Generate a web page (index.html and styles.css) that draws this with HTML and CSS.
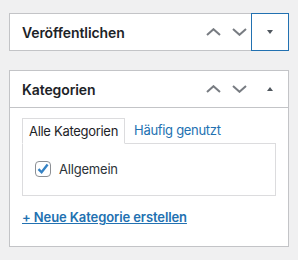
FILE: index.html
```html
<!DOCTYPE html>
<html lang="de">
<head>
    <meta charset="UTF-8">
    <meta name="viewport" content="width=device-width, initial-scale=1.0">
    <title>Beitrag bearbeiten</title>
    <link rel="stylesheet" href="styles.css">
</head>
<body>
    <!-- Box: Veröffentlichen (zugeklappt) -->
    <div class="postbox closed">
        <div class="postbox-header">
            <h2>Veröffentlichen</h2>
            <div class="handle-actions">
                <button class="handle-order">
                    <svg width="15" height="8" viewBox="0 0 15 8"><path d="M1 7 L7.5 1.2 L14 7" fill="none" stroke="#787c82" stroke-width="2"/></svg>
                </button>
                <button class="handle-order">
                    <svg width="15" height="8" viewBox="0 0 15 8"><path d="M1 1 L7.5 6.8 L14 1" fill="none" stroke="#787c82" stroke-width="2"/></svg>
                </button>
                <button class="toggle focus">
                    <span class="arrow-down"></span>
                </button>
            </div>
        </div>
    </div>

    <!-- Box: Kategorien -->
    <div class="postbox">
        <div class="postbox-header">
            <h2>Kategorien</h2>
            <div class="handle-actions">
                <button class="handle-order">
                    <svg width="15" height="8" viewBox="0 0 15 8"><path d="M1 7 L7.5 1.2 L14 7" fill="none" stroke="#787c82" stroke-width="2"/></svg>
                </button>
                <button class="handle-order">
                    <svg width="15" height="8" viewBox="0 0 15 8"><path d="M1 1 L7.5 6.8 L14 1" fill="none" stroke="#787c82" stroke-width="2"/></svg>
                </button>
                <button class="toggle">
                    <span class="arrow-up"></span>
                </button>
            </div>
        </div>
        <div class="inside">
            <ul class="category-tabs">
                <li class="tabs">Alle Kategorien</li>
                <li><a href="#">Häufig genutzt</a></li>
            </ul>
            <div class="tabs-panel">
                <label class="check-item">
                    <span class="checkbox">
                        <svg width="14" height="14" viewBox="0 0 14 14"><path d="M2.5 7.2 L5.6 10.3 L11.6 2.6" fill="none" stroke="#3582c4" stroke-width="2.4"/></svg>
                    </span>
                    Allgemein
                </label>
            </div>
            <a class="add-new" href="#">+ Neue Kategorie erstellen</a>
        </div>
    </div>
</body>
</html>
```

FILE: styles.css
```css
body {
    margin: 0;
    padding: 13px 9px 0 9px;
    background-color: #f0f0f1;
    font-family: "Inter", "Liberation Sans", sans-serif;
    color: #1d2327;
}
.postbox {
    background: #fff;
    border: 1px solid #c3c4c7;
    margin-bottom: 19px;
}
.postbox-header {
    display: flex;
    align-items: center;
    justify-content: space-between;
    height: 36px;
}
.postbox:not(.closed) .postbox-header {
    border-bottom: 1px solid #c3c4c7;
}
.postbox-header h2 {
    margin: 0;
    padding-left: 12px;
    font-size: 14px;
    font-weight: 600;
    letter-spacing: -0.1px;
}
.handle-actions {
    display: flex;
    height: 36px;
}
.handle-actions button {
    border: none;
    background: none;
    padding: 0;
    margin: 0;
    height: 36px;
    display: flex;
    align-items: center;
    justify-content: center;
}
.handle-order {
    width: 26px;
}
.toggle {
    width: 36px;
}
.toggle.focus {
    outline: 1px solid #2271b1;
}
.arrow-down, .arrow-up {
    width: 0;
    height: 0;
    border-left: 3.5px solid transparent;
    border-right: 3.5px solid transparent;
}
.arrow-down {
    border-top: 4px solid #50575e;
}
.arrow-up {
    border-bottom: 4px solid #50575e;
}
.inside {
    padding: 10px 12px 21px 12px;
    line-height: 16px;
}
.category-tabs {
    list-style: none;
    margin: 0;
    padding: 0;
    display: flex;
    font-size: 13px;
    letter-spacing: -0.3px;
}
.category-tabs li {
    padding: 5px 6px 4px 6px;
    margin-right: 3px;
    line-height: 15px;
}
.category-tabs li.tabs {
    border: 1px solid #dcdcde;
    border-bottom: 1px solid #fff;
    margin-bottom: -1px;
    background: #fff;
}
.category-tabs a {
    color: #2271b1;
    text-decoration: none;
}
.tabs-panel {
    border: 1px solid #dcdcde;
    padding: 17px 12px 18px 12px;
    margin-bottom: 12px;
}
.check-item {
    display: flex;
    align-items: center;
    font-size: 13px;
    color: #2c3338;
    letter-spacing: -0.2px;
}
.checkbox {
    width: 14px;
    height: 14px;
    border: 1px solid #8c8f94;
    border-radius: 4px;
    margin-right: 8px;
    display: flex;
    align-items: center;
    justify-content: center;
}
.add-new {
    font-size: 13px;
    font-weight: 600;
    color: #2271b1;
    text-decoration: underline;
    letter-spacing: -0.1px;
}
```
